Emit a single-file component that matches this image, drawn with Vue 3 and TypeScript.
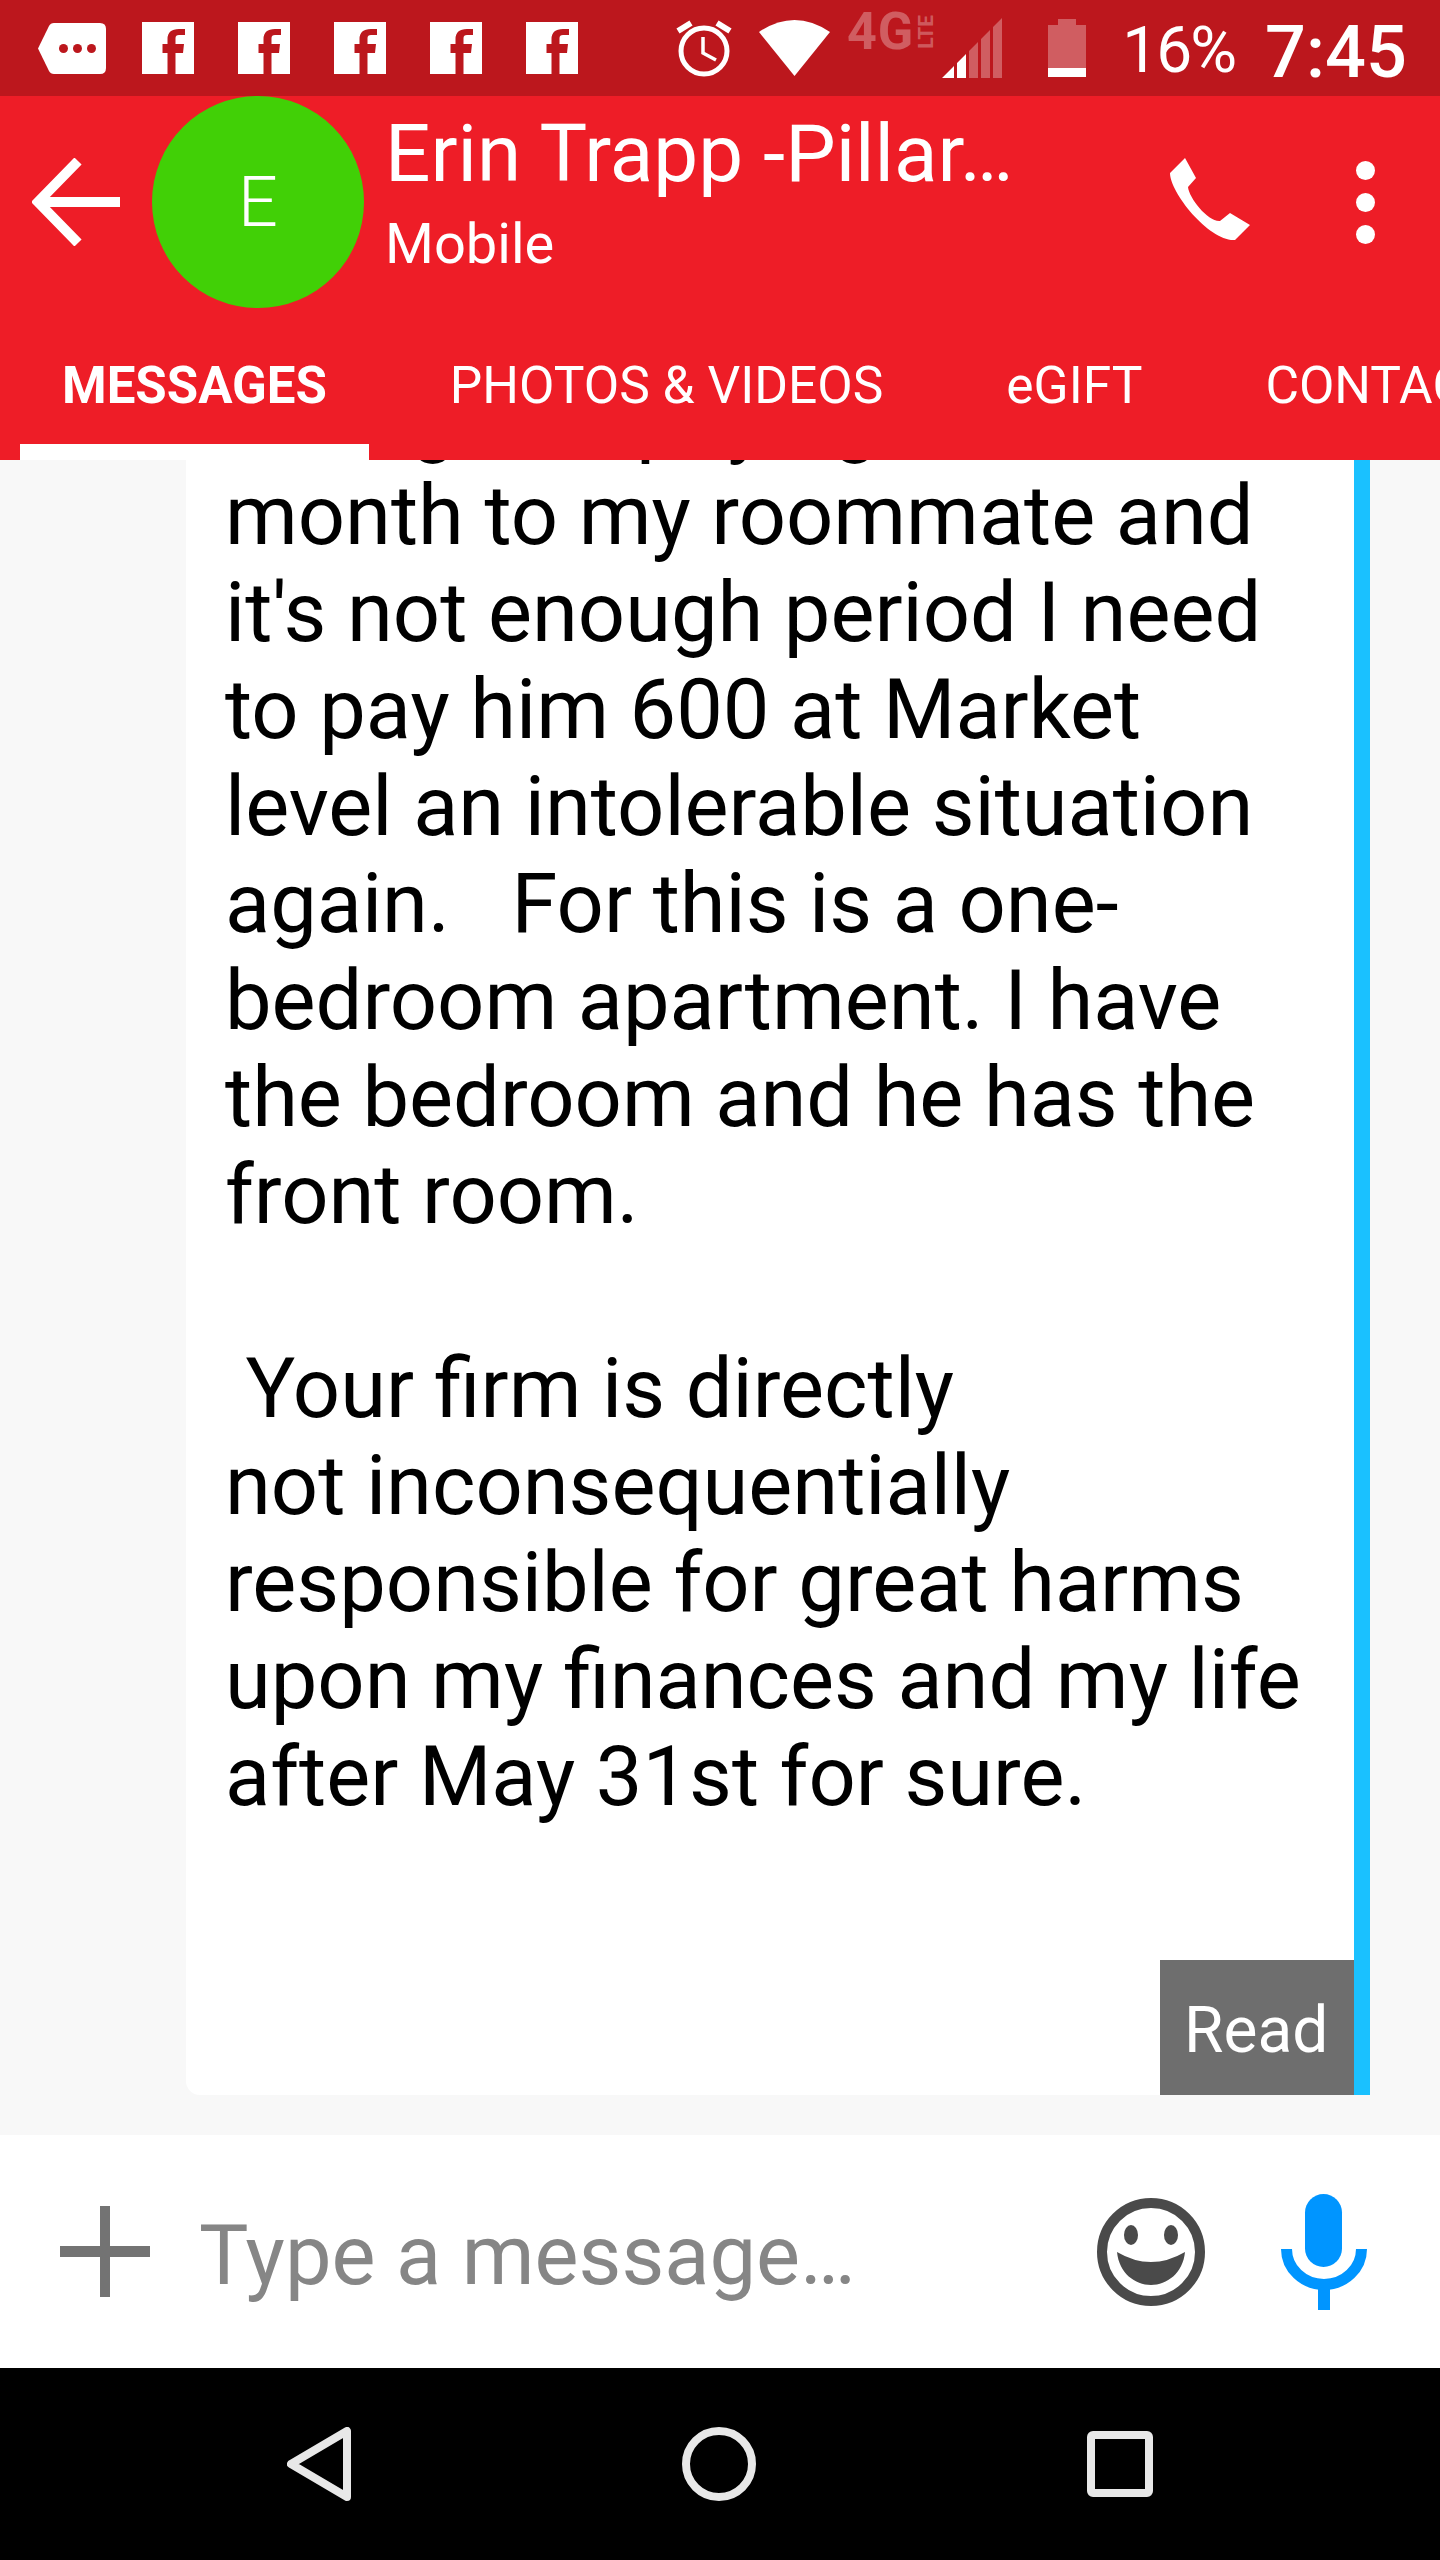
<script setup lang="ts">
const lines = [
  "month to my roommate and",
  "it's not enough period I need",
  "to pay him 600 at Market",
  "level an intolerable situation",
  "again.   For this is a one-",
  "bedroom apartment. I have",
  "the bedroom and he has the",
  "front room.",
  "",
  " Your firm is directly",
  "not inconsequentially",
  "responsible for great harms",
  "upon my finances and my life",
  "after May 31st for sure.",
];
const tabs = ["MESSAGES", "PHOTOS & VIDEOS", "eGIFT", "CONTACT"];
const fbIcons = [1, 2, 3, 4, 5];
</script>

<template>
  <div class="phone">
    <div class="status">
      <svg class="st-bubble" width="68" height="51" viewBox="0 0 68 51">
        <path d="M0 25.500L11 3Q12.500 0 16 0H62Q68 0 68 6V45Q68 51 62 51H16Q12.500 51 11 48Z" fill="#fff" />
        <ellipse cx="25.500" cy="25.500" rx="4.500" ry="4.500" fill="#bc171d" />
        <ellipse cx="39.500" cy="25.500" rx="4.500" ry="4.500" fill="#bc171d" />
        <ellipse cx="53.500" cy="25.500" rx="4.500" ry="4.500" fill="#bc171d" />
      </svg>
      <div class="fb-row">
        <svg v-for="i in fbIcons" :key="i" width="52" height="52" viewBox="0 0 52 52">
          <path
            d="M0 0H52V52H33.500V31H41L42 22H33.500V16Q33.500 13 37 13H43V7H37Q25.500 7 25.500 17V22H20.500V31H25.500V52H0Z"
            fill="#fff"
          />
        </svg>
      </div>
      <svg class="st-alarm" width="56" height="58" viewBox="0 0 56 58">
        <circle cx="28" cy="32" r="23" fill="none" stroke="#fff" stroke-width="5" />
        <path d="M27 18V34L40 41" fill="none" stroke="#fff" stroke-width="3.500" />
        <path d="M2 12L15 4M54 12L41 4" fill="none" stroke="#fff" stroke-width="6" />
      </svg>
      <svg class="st-wifi" width="71" height="56" viewBox="0 0 71 56">
        <path d="M0 12Q35.500 -12 71 12L35.500 56Z" fill="#fff" />
      </svg>
      <div class="st-net">
        <span class="net-4g">4G</span>
        <span class="net-lte">LTE</span>
      </div>
      <svg class="st-signal" width="60" height="60" viewBox="0 0 60 60">
        <path d="M0 60L12 48V60Z M15 45L24 36V60H15Z" fill="#fff" />
        <path d="M27 33L36 24V60H27Z M39 21L48 12V60H39Z M51 9L60 0V60H51Z" fill="#fff" opacity="0.3" />
      </svg>
      <svg class="st-batt" width="38" height="58" viewBox="0 0 38 58">
        <path d="M10 0H28V6H38V49H0V6H10Z" fill="#fff" opacity="0.3" />
        <rect y="49" width="38" height="9" fill="#fff" />
      </svg>
      <span class="st-pct">16%</span>
      <span class="st-time">7:45</span>
    </div>

    <header class="toolbar">
      <div class="top-row">
        <svg class="back" width="88" height="88" viewBox="0 0 88 88">
          <path d="M88 44H6M46 3L6 44L46 85" fill="none" stroke="#fff" stroke-width="10" />
        </svg>
        <div class="avatar">E</div>
        <div class="who">
          <div class="name">Erin Trapp -Pillar…</div>
          <div class="kind">Mobile</div>
        </div>
        <svg class="call" width="80" height="84" viewBox="0 0 80 84">
          <path d="M15 0L26 20L18 29C19 40 38 64 50 63L60 55L80 67L65 82C40 84 0 35 0 15Z" fill="#fff" />
        </svg>
        <div class="more">
          <i></i>
          <i></i>
          <i></i>
        </div>
      </div>
      <nav class="tabs">
        <div v-for="(t, i) in tabs" :key="t" class="tab" :class="{ active: i === 0 }">{{ t }}</div>
      </nav>
    </header>

    <main class="thread">
      <div class="bubble">
        <div class="clipped">Owing and paying 300 a</div>
        <div v-for="(l, i) in lines" :key="i" class="line">{{ l || "\u00a0" }}</div>
        <div class="read">Read</div>
      </div>
    </main>

    <div class="composer">
      <svg class="plus" width="90" height="91" viewBox="0 0 90 91">
        <path d="M45 0V91" stroke="#737373" stroke-width="10" />
        <path d="M0 45.500H90" stroke="#737373" stroke-width="11" />
      </svg>
      <div class="placeholder">Type a message…</div>
      <svg class="smile" width="108" height="108" viewBox="0 0 108 108">
        <circle cx="54" cy="54" r="49" fill="none" stroke="#4a4a4a" stroke-width="10" />
        <ellipse cx="34" cy="37" rx="7" ry="10" fill="#4a4a4a" />
        <ellipse cx="74" cy="37" rx="7" ry="10" fill="#4a4a4a" />
        <path d="M20 54Q54 74 88 54C86 75 70 87 54 87C38 87 22 75 20 54Z" fill="#4a4a4a" />
      </svg>
      <svg class="mic" width="86" height="116" viewBox="0 0 86 116">
        <rect x="24" y="0" width="37" height="73" rx="18.500" fill="#0095ff" />
        <path d="M5.500 55A37.500 35.500 0 0 0 80.500 55" fill="none" stroke="#0095ff" stroke-width="11" />
        <rect x="37" y="90" width="12" height="26" fill="#0095ff" />
      </svg>
    </div>

    <div class="navbar">
      <svg width="64" height="74" viewBox="0 0 64 74">
        <path d="M60 4V70L4 37Z" fill="none" stroke="#e8e8e8" stroke-width="8" stroke-linejoin="round" />
      </svg>
      <svg width="74" height="74" viewBox="0 0 74 74">
        <circle cx="37" cy="37" r="33" fill="none" stroke="#e8e8e8" stroke-width="8" />
      </svg>
      <svg width="66" height="66" viewBox="0 0 66 66">
        <rect x="4" y="4" width="58" height="58" rx="2" fill="none" stroke="#e8e8e8" stroke-width="8" />
      </svg>
    </div>
  </div>
</template>

<style>
html,
body {
  margin: 0;
  background: #000;
}
</style>

<style scoped>
.phone {
  width: 1440px;
  height: 2560px;
  display: flex;
  flex-direction: column;
  overflow: hidden;
  font-family: Roboto, sans-serif;
  background: #f8f8f8;
}

.status {
  height: 96px;
  flex: none;
  box-sizing: border-box;
  background: #bc171d;
  display: flex;
  align-items: center;
  padding-left: 38px;
  color: #fff;
}

.fb-row {
  display: flex;
  gap: 44px;
  margin-left: 36px;
}

.st-alarm {
  margin-left: 98px;
}

.st-wifi {
  margin-left: 27px;
}

.st-net {
  display: flex;
  align-items: center;
  gap: 3px;
  margin-left: 17px;
  margin-bottom: 33px;
  height: 37px;
  color: rgba(255, 255, 255, 0.3);
  font-weight: 700;
}

.net-4g {
  font-size: 52px;
  line-height: 37px;
  letter-spacing: 1px;
}

.net-lte {
  writing-mode: vertical-rl;
  transform: rotate(180deg);
  font-size: 21px;
  line-height: 19px;
}

.st-signal {
  margin-left: 6px;
}

.st-batt {
  margin-left: 46px;
}

.st-pct {
  margin-left: 36px;
  margin-top: 4px;
  font-size: 64px;
  letter-spacing: -2px;
}

.st-time {
  margin-left: 30px;
  margin-top: 8px;
  font-size: 72px;
  font-weight: 500;
}

.toolbar {
  height: 364px;
  flex: none;
  background: #ee1d27;
  color: #fff;
  display: flex;
  flex-direction: column;
}

.top-row {
  height: 212px;
  flex: none;
  display: flex;
  align-items: center;
  padding-left: 32px;
}

.avatar {
  width: 212px;
  height: 212px;
  flex: none;
  margin-left: 32px;
  border-radius: 50%;
  background: #41d006;
  display: flex;
  align-items: center;
  justify-content: center;
  font-size: 70px;
  font-weight: 300;
}

.who {
  margin-left: 21px;
  width: 785px;
  flex: none;
  align-self: flex-start;
  padding-top: 11px;
}

.name {
  font-size: 80px;
  line-height: 94px;
}

.kind {
  margin-top: 8px;
  font-size: 56px;
  line-height: 70px;
}

.call {
  margin-top: -4px;
}

.more {
  margin-left: 106px;
  display: flex;
  flex-direction: column;
  gap: 13px;
}

.more i {
  display: block;
  width: 19px;
  height: 19px;
  border-radius: 50%;
  background: #fff;
}

.tabs {
  flex: 1;
  display: flex;
  padding-left: 20px;
  overflow: hidden;
}

.tab {
  flex: none;
  box-sizing: border-box;
  height: 152px;
  padding: 47px 42px 0;
  margin-right: 39px;
  font-size: 51.5px;
  line-height: 61px;
  white-space: nowrap;
}

.tab.active {
  font-size: 51px;
  font-weight: 700;
  border-bottom: 16px solid #fff;
}

.thread {
  flex: 1;
  overflow: hidden;
  padding: 0 70px 40px 186px;
  display: flex;
  flex-direction: column;
  justify-content: flex-end;
}

.bubble {
  position: relative;
  height: 1635px;
  flex: none;
  overflow: hidden;
  box-sizing: border-box;
  background: #fff;
  border-right: 16px solid #1ac1ff;
  border-bottom-left-radius: 14px;
  padding-left: 39px;
  font-size: 83px;
  line-height: 97px;
  color: #000;
}

.clipped {
  margin-top: -90px;
  white-space: pre;
}

.line {
  white-space: pre;
}

.read {
  position: absolute;
  right: 0;
  bottom: 0;
  width: 194px;
  height: 135px;
  box-sizing: border-box;
  background: #6e6e6e;
  color: #fff;
  font-size: 64px;
  line-height: 70px;
  padding: 36px 0 0 24px;
}

.composer {
  height: 233px;
  flex: none;
  box-sizing: border-box;
  background: #fff;
  display: flex;
  align-items: center;
  padding: 0 73px 0 60px;
}

.placeholder {
  margin-left: 49px;
  margin-top: 8px;
  font-size: 83px;
  color: #868686;
}

.smile {
  margin-left: auto;
}

.mic {
  margin-left: 76px;
}

.navbar {
  height: 192px;
  flex: none;
  background: #000;
  display: flex;
  align-items: center;
  justify-content: center;
  gap: 331px;
}
</style>
